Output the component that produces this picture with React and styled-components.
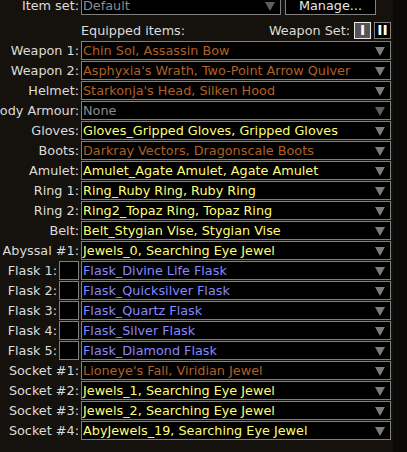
import React from 'react'
import styled, { createGlobalStyle } from 'styled-components'

const GlobalStyle = createGlobalStyle`
  html, body {
    margin: 0;
    padding: 0;
    background: #0c0a08;
  }
  body {
    font-family: "DejaVu Sans", sans-serif;
    font-size: 12.8px;
    color: #dcdcdc;
  }
`

const COLORS = {
  unique: '#af6025',
  rare: '#ffff77',
  magic: '#8888ff',
  none: '#8c8c8c',
}

const slots = [
  { label: 'Weapon 1:', item: 'Chin Sol, Assassin Bow', kind: 'unique' },
  { label: 'Weapon 2:', item: "Asphyxia's Wrath, Two-Point Arrow Quiver", kind: 'unique' },
  { label: 'Helmet:', item: "Starkonja's Head, Silken Hood", kind: 'unique' },
  { label: 'Body Armour:', item: 'None', kind: 'none' },
  { label: 'Gloves:', item: 'Gloves_Gripped Gloves, Gripped Gloves', kind: 'rare' },
  { label: 'Boots:', item: 'Darkray Vectors, Dragonscale Boots', kind: 'unique' },
  { label: 'Amulet:', item: 'Amulet_Agate Amulet, Agate Amulet', kind: 'rare' },
  { label: 'Ring 1:', item: 'Ring_Ruby Ring, Ruby Ring', kind: 'rare' },
  { label: 'Ring 2:', item: 'Ring2_Topaz Ring, Topaz Ring', kind: 'rare' },
  { label: 'Belt:', item: 'Belt_Stygian Vise, Stygian Vise', kind: 'rare' },
  { label: 'Abyssal #1:', item: 'Jewels_0, Searching Eye Jewel', kind: 'rare' },
  { label: 'Flask 1:', item: 'Flask_Divine Life Flask', kind: 'magic', flask: true },
  { label: 'Flask 2:', item: 'Flask_Quicksilver Flask', kind: 'magic', flask: true },
  { label: 'Flask 3:', item: 'Flask_Quartz Flask', kind: 'magic', flask: true },
  { label: 'Flask 4:', item: 'Flask_Silver Flask', kind: 'magic', flask: true },
  { label: 'Flask 5:', item: 'Flask_Diamond Flask', kind: 'magic', flask: true },
  { label: 'Socket #1:', item: "Lioneye's Fall, Viridian Jewel", kind: 'unique' },
  { label: 'Socket #2:', item: 'Jewels_1, Searching Eye Jewel', kind: 'rare' },
  { label: 'Socket #3:', item: 'Jewels_2, Searching Eye Jewel', kind: 'rare' },
  { label: 'Socket #4:', item: 'AbyJewels_19, Searching Eye Jewel', kind: 'rare' },
]

const Arrow = ({ dim }) => (
  <svg width="10" height="9" viewBox="0 0 10 9">
    <polygon points="0,0 10,0 5,9" fill={dim ? '#5e5e5e' : '#7c7c7c'} />
  </svg>
)

const App = () => {
  return (
    <Page>
      <GlobalStyle />
      <Panel>
        <TopRow>
          <Label>Item set:</Label>
          <Dropdown width="200px">
            <ItemText color="#8c8c8c">Default</ItemText>
            <Arrow dim />
          </Dropdown>
          <Button>Manage...</Button>
        </TopRow>
        <HeaderRow>
          <span>Equipped items:</span>
          <WeaponSet>
            Weapon Set:
            <SetButton active>I</SetButton>
            <SetButton>II</SetButton>
          </WeaponSet>
        </HeaderRow>
        <Slots>
          {slots.map((s) => (
            <SlotRow key={s.label}>
              <Label narrow={s.flask}>{s.label}</Label>
              {s.flask && <FlaskBox />}
              <Dropdown>
                <ItemText color={COLORS[s.kind]}>{s.item}</ItemText>
                <Arrow dim={s.kind === 'none'} />
              </Dropdown>
            </SlotRow>
          ))}
        </Slots>
      </Panel>
      <Gutter />
    </Page>
  )
}

export default App

const Page = styled.div`
  display: flex;
  width: 407px;
  height: 452px;
  overflow: hidden;
`

const Panel = styled.div`
  width: 393px;
  height: 452px;
  background: #15110d;
  display: flex;
  flex-direction: column;
`

const Gutter = styled.div`
  flex: 1;
  background: #0c0a08;
`

const TopRow = styled.div`
  display: flex;
  align-items: center;
  gap: 2px;
  height: 19px;
  margin-top: -4px;
`

const Label = styled.div`
  width: ${(p) => (p.narrow ? '57px' : '79px')};
  flex-shrink: 0;
  display: flex;
  justify-content: flex-end;
  white-space: nowrap;
  color: #dcdcdc;
  line-height: 19px;
`

const Dropdown = styled.div`
  box-sizing: border-box;
  width: ${(p) => p.width || '310px'};
  height: 19px;
  flex-shrink: 0;
  background: #000;
  border: 1px solid #808080;
  display: flex;
  align-items: center;
  justify-content: space-between;
  padding: 0 5px 0 1px;
  svg {
    flex-shrink: 0;
    margin-top: 1px;
  }
`

const ItemText = styled.span`
  color: ${(p) => p.color};
  white-space: nowrap;
  line-height: 17px;
`

const Button = styled.div`
  box-sizing: border-box;
  margin-left: 2px;
  width: 91px;
  height: 19px;
  background: #000;
  border: 1px solid #808080;
  color: #e6e6e6;
  text-align: center;
  line-height: 17px;
`

const HeaderRow = styled.div`
  display: flex;
  align-items: center;
  justify-content: space-between;
  height: 17px;
  margin: 7px 2px 2px 81px;
`

const WeaponSet = styled.div`
  display: flex;
  align-items: center;
  gap: 3px;
`

const SetButton = styled.div`
  box-sizing: border-box;
  width: 17px;
  height: 17px;
  margin-left: ${(p) => (p.active ? '1px' : '0')};
  background: ${(p) => (p.active ? '#555' : '#000')};
  border: 1px solid ${(p) => (p.active ? '#e8e8e8' : '#808080')};
  color: #fff;
  font-weight: bold;
  font-size: 14px;
  text-align: center;
  line-height: 15px;
`

const Slots = styled.div`
  display: flex;
  flex-direction: column;
  gap: 1px;
`

const SlotRow = styled.div`
  display: flex;
  align-items: center;
  gap: 2px;
  height: 19px;
`

const FlaskBox = styled.div`
  box-sizing: border-box;
  width: 20px;
  height: 19px;
  flex-shrink: 0;
  background: #000;
  border: 1px solid #808080;
`
